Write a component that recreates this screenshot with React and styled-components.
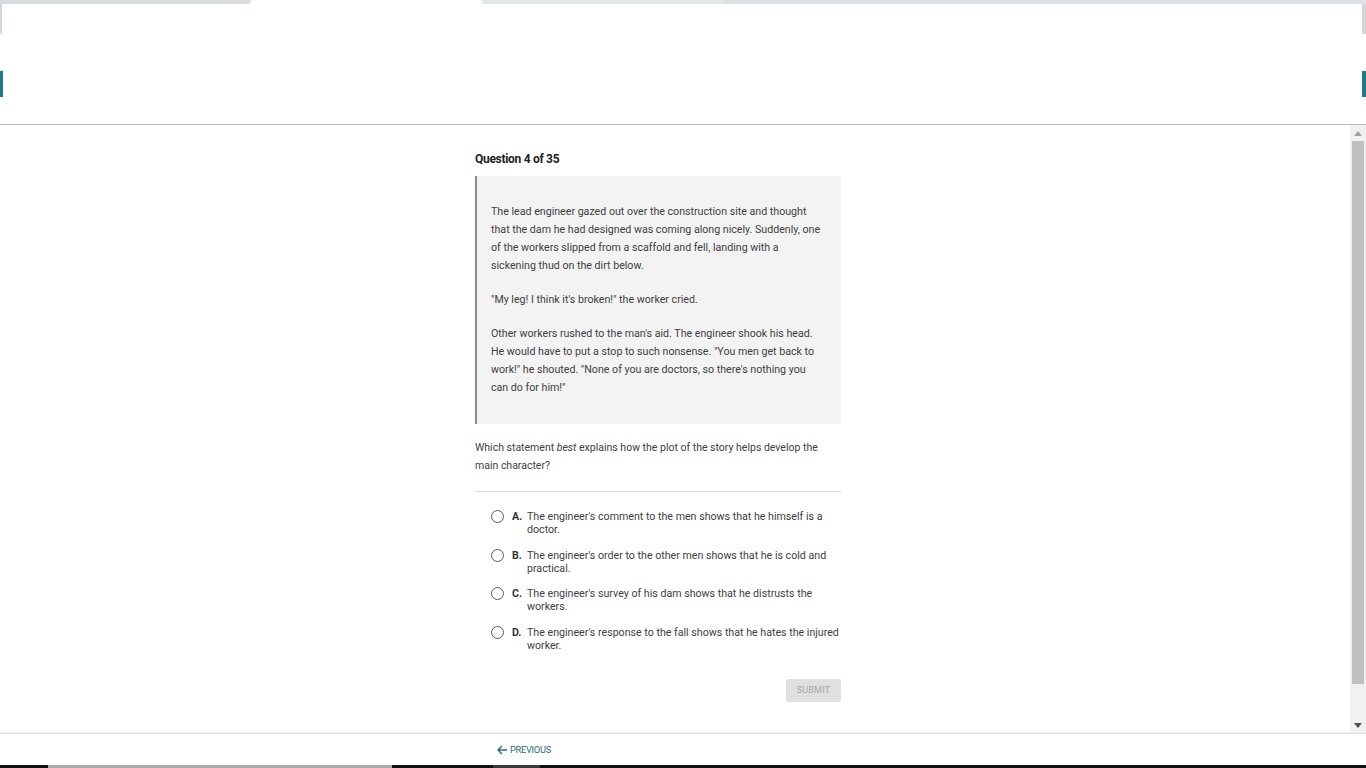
import styled, { createGlobalStyle } from "styled-components"

const GlobalStyle = createGlobalStyle`
  html, body {
    margin: 0;
    padding: 0;
    background: #ffffff;
    font-family: Roboto, "Liberation Sans", Arial, sans-serif;
    color: #333333;
  }
`

const Page = styled.div`
  width: 1366px;
  height: 768px;
  display: flex;
  flex-direction: column;
  overflow: hidden;
`

const TabStrip = styled.div`
  height: 4px;
  display: flex;
  background: #dee1e6;
`

const Tab = styled.div`
  width: ${(p) => p.w}px;
  background: ${(p) => p.bg};
  border-radius: ${(p) => (p.round ? "6px 6px 0 0" : "0")};
`

const Header = styled.header`
  height: 121px;
  border-bottom: 1px solid #b8b8b8;
  display: flex;
  justify-content: space-between;
  box-sizing: border-box;
`

const EdgeColumn = styled.div`
  width: ${(p) => p.w}px;
  display: flex;
  flex-direction: column;
`

const EdgeLine = styled.div`
  height: 30px;
  background: #d4d6da;
`

const EdgeMark = styled.div`
  margin-top: 37px;
  height: 26px;
  width: ${(p) => p.w}px;
  background: #1b7d8b;
`

const Main = styled.div`
  flex: 1;
  display: flex;
  min-height: 0;
`

const Content = styled.main`
  flex: 1;
  padding: 26px 0 0 475px;
`

const Column = styled.div`
  width: 366px;
  display: flex;
  flex-direction: column;
`

const Title = styled.h2`
  margin: 0;
  font-size: 12px;
  line-height: 16px;
  font-weight: 700;
  color: #222222;
  letter-spacing: -0.3px;
`

const Passage = styled.blockquote`
  margin: 9px 0 0 0;
  background: #f3f3f3;
  border-left: 2px solid #8c8c8c;
  padding: 11px 18px 11px 14px;
`

const Para = styled.p`
  margin: 16px 0;
  font-size: 10.65px;
  line-height: 18px;
  color: #404040;
`

const Prompt = styled.p`
  margin: 15px 0 0 0;
  font-size: 10.5px;
  line-height: 18px;
  white-space: nowrap;
  color: #404040;
  padding-bottom: 16px;
  border-bottom: 1px solid #dcdcdc;
`

const Options = styled.div`
  display: flex;
  flex-direction: column;
  gap: 12.5px;
  margin-top: 18px;
  padding-left: 16px;
`

const Option = styled.label`
  display: flex;
  align-items: flex-start;
  font-size: 10.65px;
  line-height: 13px;
  color: #404040;
`

const Radio = styled.span`
  width: 11px;
  height: 11px;
  border: 1px solid #5a5a5a;
  border-radius: 50%;
  flex: none;
`

const Letter = styled.b`
  width: 15px;
  margin-left: 8px;
  flex: none;
  font-weight: 700;
  color: #333333;
`

const OptionText = styled.span`
  flex: 1;
`

const Actions = styled.div`
  display: flex;
  justify-content: flex-end;
  margin-top: 27px;
`

const SubmitButton = styled.button`
  width: 55px;
  height: 23px;
  border: none;
  border-radius: 2px;
  background: #e0e0e0;
  color: #a6a6a6;
  font-family: Roboto, "Liberation Sans", Arial, sans-serif;
  font-size: 9px;
  letter-spacing: 0.2px;
  padding: 0;
`

const ScrollTrack = styled.div`
  width: 16px;
  background: #f1f1f1;
  display: flex;
  flex-direction: column;
  align-items: center;
`

const ScrollArrow = styled.div`
  height: 16px;
  width: 16px;
  display: flex;
  align-items: center;
  justify-content: center;
`

const ScrollThumb = styled.div`
  width: 12px;
  height: 543px;
  background: #c1c1c1;
`

const ScrollSpace = styled.div`
  flex: 1;
`

const Footer = styled.footer`
  height: 31px;
  border-top: 1px solid #dedede;
  box-shadow: 0 -1px 0 #f2f2f2;
  display: flex;
  align-items: center;
  padding-left: 497px;
`

const PrevLink = styled.a`
  display: flex;
  align-items: center;
  gap: 2px;
  color: #2a6f7d;
  font-family: Roboto, "Liberation Sans", sans-serif;
  font-size: 9.3px;
  letter-spacing: -0.3px;
  text-decoration: none;
`

const BottomBar = styled.div`
  height: 3px;
  display: flex;
  background: #111111;
`

const BarSeg = styled.div`
  width: ${(p) => p.w}px;
  background: ${(p) => p.bg};
`

const options = [
  ["A.", "The engineer's comment to the men shows that he himself is a doctor."],
  ["B.", "The engineer's order to the other men shows that he is cold and practical."],
  ["C.", "The engineer's survey of his dam shows that he distrusts the workers."],
  ["D.", "The engineer's response to the fall shows that he hates the injured worker."],
]

const Triangle = ({ up, color }) => (
  <svg width="8" height="5" viewBox="0 0 8 5">
    <path d={up ? "M0 5 L4 0 L8 5 Z" : "M0 0 L8 0 L4 5 Z"} fill={color} />
  </svg>
)

const App = () => {
  return (
    <Page>
      <GlobalStyle />
      <TabStrip>
        <Tab w={250} bg="#dadce0" />
        <Tab w={233} bg="#ffffff" round />
        <Tab w={239} bg="#e6e7ea" />
      </TabStrip>
      <Header>
        <EdgeColumn w={2}>
          <EdgeLine />
          <EdgeMark w={3} />
        </EdgeColumn>
        <EdgeColumn w={4}>
          <EdgeLine />
          <EdgeMark w={4} />
        </EdgeColumn>
      </Header>
      <Main>
        <Content>
          <Column>
            <Title>Question 4 of 35</Title>
            <Passage>
              <Para>
                The lead engineer gazed out over the construction site and thought that the dam he had
                designed was coming along nicely. Suddenly, one of the workers slipped from a scaffold
                and fell, landing with a sickening thud on the dirt below.
              </Para>
              <Para>"My leg! I think it's broken!" the worker cried.</Para>
              <Para>
                Other workers rushed to the man's aid. The engineer shook his head. He would have to put
                a stop to such nonsense. "You men get back to work!" he shouted. "None of you are
                doctors, so there's nothing you can do for him!"
              </Para>
            </Passage>
            <Prompt>
              Which statement <i>best</i> explains how the plot of the story helps develop the
              <br />
              main character?
            </Prompt>
            <Options>
              {options.map(([letter, text]) => (
                <Option key={letter}>
                  <Radio />
                  <Letter>{letter}</Letter>
                  <OptionText>{text}</OptionText>
                </Option>
              ))}
            </Options>
            <Actions>
              <SubmitButton disabled>SUBMIT</SubmitButton>
            </Actions>
          </Column>
        </Content>
        <ScrollTrack>
          <ScrollArrow>
            <Triangle up color="#a3a3a3" />
          </ScrollArrow>
          <ScrollThumb />
          <ScrollSpace />
          <ScrollArrow>
            <Triangle color="#505050" />
          </ScrollArrow>
        </ScrollTrack>
      </Main>
      <Footer>
        <PrevLink href="#">
          <svg width="11" height="10" viewBox="0 0 11 10">
            <path d="M10 5 H1.5 M5 1 L1 5 L5 9" stroke="#2a6f7d" strokeWidth="1.5" fill="none" />
          </svg>
          PREVIOUS
        </PrevLink>
      </Footer>
      <BottomBar>
        <BarSeg w={48} bg="#111111" />
        <BarSeg w={344} bg="#a9a9a9" />
        <BarSeg w={101} bg="#111111" />
        <BarSeg w={47} bg="#3a3a3a" />
      </BottomBar>
    </Page>
  )
}

export default App
